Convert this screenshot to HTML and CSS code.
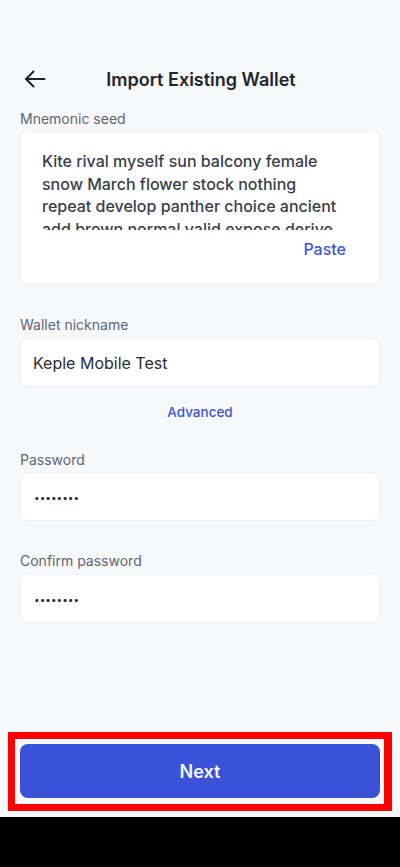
FILE: index.html
```html
<!DOCTYPE html>
<html lang="en">
<head>
<meta charset="utf-8">
<title>Import Existing Wallet</title>
<link rel="stylesheet" href="styles.css">
</head>
<body>
<div class="screen">
  <main class="content">
    <header class="header">
      <button class="back" aria-label="Back">
        <svg width="22" height="18" viewBox="0 0 22 18" fill="none" stroke="#1f2228" stroke-width="2" stroke-linecap="round" stroke-linejoin="round">
          <path d="M20.5 9H2"/>
          <path d="M9.5 1.5L2 9l7.5 7.5"/>
        </svg>
      </button>
      <h1 class="title">Import Existing Wallet</h1>
    </header>

    <div class="label label-first">Mnemonic seed</div>
    <div class="card seed">
      <div class="seed-text">Kite rival myself sun balcony female snow March flower stock nothing repeat develop panther choice ancient add brown normal valid expose derive</div>
      <div class="paste-row"><span class="link paste">Paste</span></div>
    </div>

    <div class="label label-gap">Wallet nickname</div>
    <div class="card field"><span class="field-text">Keple Mobile Test</span></div>

    <div class="advanced-row"><span class="link advanced">Advanced</span></div>

    <div class="label label-pw">Password</div>
    <div class="card field"><span class="dots">••••••••</span></div>

    <div class="label label-confirm">Confirm password</div>
    <div class="card field"><span class="dots">••••••••</span></div>
  </main>

  <footer class="footer">
    <div class="highlight">
      <button class="next">Next</button>
    </div>
  </footer>
  <div class="navbar"></div>
</div>
</body>
</html>
```

FILE: styles.css
```css
* { box-sizing: border-box; }
html, body {
  margin: 0;
  padding: 0;
  background: #f7f8fa;
}
body {
  font-family: Inter, Roboto, "Noto Sans", "Liberation Sans", sans-serif;
  color: #2b2f36;
}
.screen {
  width: 400px;
  height: 867px;
  display: flex;
  flex-direction: column;
}
.content {
  flex: 1;
  padding: 0 21px 0 21px;
  display: flex;
  flex-direction: column;
}
.header {
  height: 42px;
  margin-top: 58px;
  display: flex;
  align-items: center;
  justify-content: center;
  position: relative;
}
.back {
  position: absolute;
  left: 3px;
  top: 12px;
  width: 22px;
  height: 18px;
  padding: 0;
  border: 0;
  background: none;
  display: flex;
}
.title {
  margin: 0;
  font-size: 18px;
  font-weight: 600;
  color: #23262d;
  margin-left: 2px;
}
.label {
  font-size: 14px;
  line-height: 20px;
  color: #5f6673;
  margin-left: -1px;
  margin-bottom: 4px;
}
.label-first { margin-top: 9px; margin-bottom: 3px; }
.label-gap { margin-top: 31px; }
.label-pw { margin-top: 28px; margin-bottom: 3px; }
.label-confirm { margin-top: 31px; margin-bottom: 4px; }
.card {
  background: #ffffff;
  border-radius: 6px;
  box-shadow: 0 0 0 1px #f0f1f4;
}
.seed {
  height: 152px;
  padding: 18px 30px 0 21px;
  display: flex;
  flex-direction: column;
}
.seed-text {
  height: 80px;
  overflow: hidden;
  font-size: 16px;
  line-height: 22.5px;
  font-weight: 500;
  color: #3a3e48;
}
.paste-row {
  display: flex;
  justify-content: flex-end;
  margin-top: 8px;
  padding-right: 3px;
}
.link {
  color: #3d54d9;
  font-weight: 500;
}
.paste {
  font-size: 16px;
  line-height: 22px;
}
.field {
  height: 47px;
  padding: 0 12px;
  display: flex;
  align-items: center;
}
.field-text {
  font-size: 16px;
  color: #2a2d33;
}
.dots {
  font-size: 10px;
  color: #2a2d33;
  margin-left: 1px;
}
.advanced-row {
  display: flex;
  justify-content: center;
  margin-top: 16px;
}
.advanced {
  font-size: 13.5px;
  line-height: 20px;
}
.footer {
  padding: 0 8px;
  margin-bottom: 6px;
}
.highlight {
  border: 7px solid #ff0000;
  border-right-width: 8px;
  padding: 5px 4px 6px 5px;
}
.next {
  display: block;
  width: 100%;
  height: 54px;
  border: 0;
  border-radius: 8px;
  background: #3b52d8;
  color: #f4f5fb;
  font-family: Inter, Roboto, "Noto Sans", "Liberation Sans", sans-serif;
  font-size: 18px;
  font-weight: 600;
}
.navbar {
  height: 50px;
  background: #000000;
}
```
